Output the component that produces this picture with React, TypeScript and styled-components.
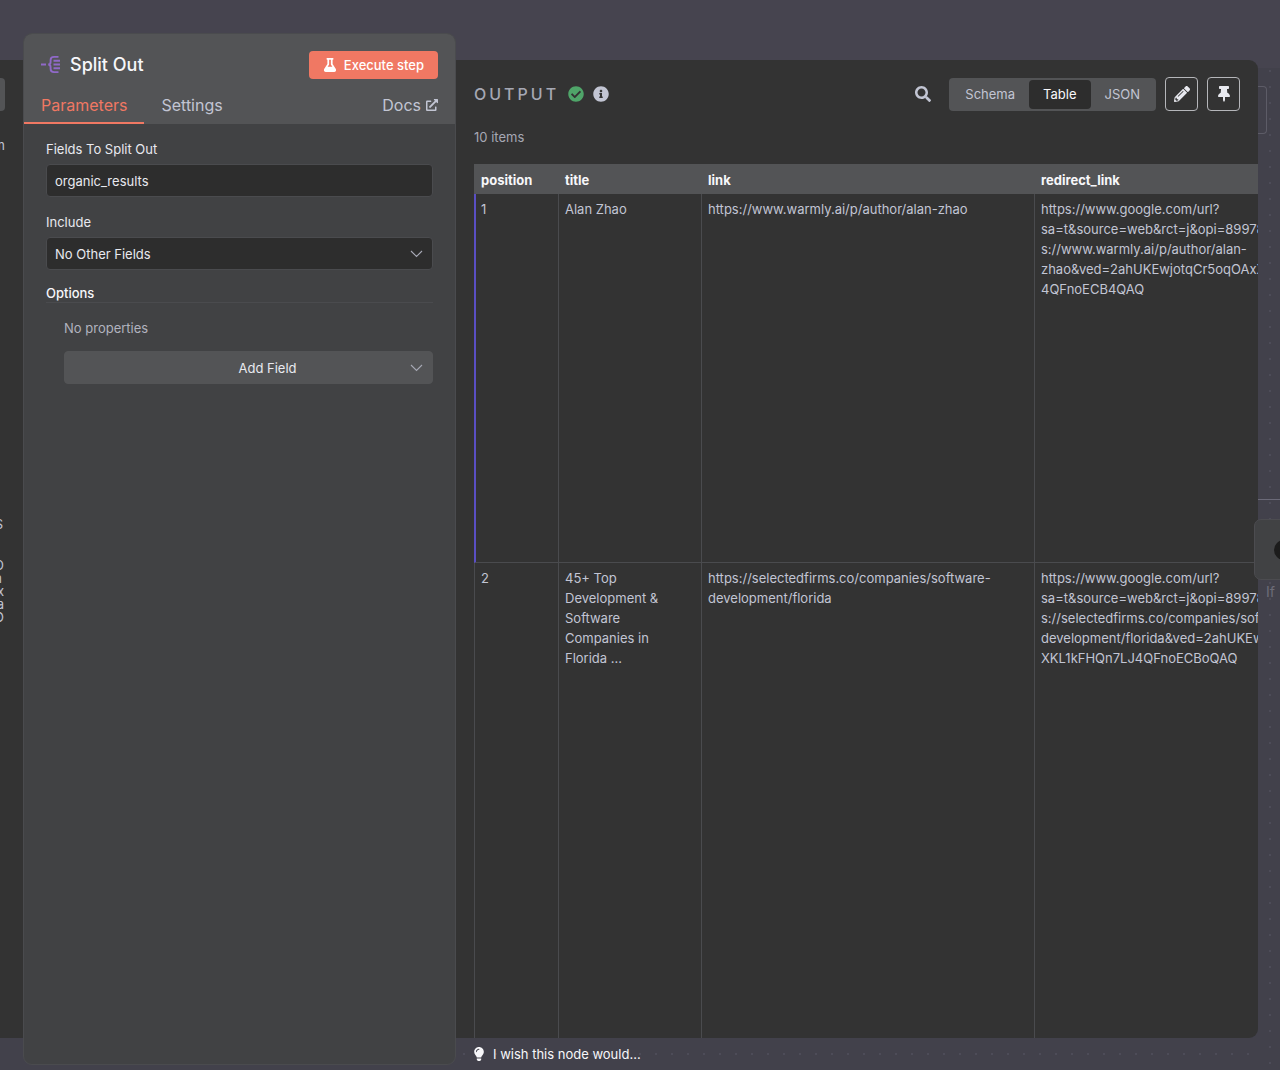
import React, { useState } from 'react';
import styled, { createGlobalStyle, css } from 'styled-components';
import {
  FaCheckCircle,
  FaExternalLinkAlt,
  FaFlask,
  FaInfoCircle,
  FaLightbulb,
  FaPencilAlt,
  FaSearch,
  FaThumbtack,
} from 'react-icons/fa';

const color = {
  canvas: '#42414b',
  canvasTop: '#46444f',
  dot: '#4d4c58',
  panel: '#333333',
  params: '#414244',
  raised: '#535456',
  line: '#4a4b4e',
  field: '#2d2d2d',
  text: '#e8e9ef',
  bright: '#f7f7fa',
  muted: '#c2c5d3',
  dim: '#a6a8b4',
  accent: '#f07863',
  run: '#5a4fc4',
};

const GlobalStyle = createGlobalStyle`
  * { box-sizing: border-box; }
  body { margin: 0; background: ${color.canvas}; }
  body, button, input, select {
    font-family: Inter, "Liberation Sans", sans-serif;
    font-size: 13px;
    line-height: 20px;
  }
  button { cursor: pointer; }
`;

const Page = styled.div`
  display: grid;
  grid-template-columns: 23px 433px minmax(0, 1fr) 22px;
  height: 100vh;
  overflow: hidden;
  background: linear-gradient(${color.canvasTop} 68px, ${color.canvas} 68px);
`;

/* Input panel, mostly scrolled out on the left */
const InputPanel = styled.aside`
  margin: 60px 0 32px;
  background: ${color.panel};
  color: ${color.muted};
  overflow: hidden;
  display: flex;
  flex-direction: column;
  align-items: flex-start;
`;

const InputToggle = styled.span`
  width: 5px;
  height: 33px;
  margin-top: 18px;
  background: ${color.raised};
  border-radius: 0 4px 4px 0;
`;

const Sliver = styled.span<{ $width: number; $top: number }>`
  display: flex;
  justify-content: flex-end;
  width: ${(p) => p.$width}px;
  margin-top: ${(p) => p.$top}px;
  overflow: hidden;
`;

const SliverLines = styled.div`
  display: flex;
  flex-direction: column;
  margin-top: 25px;
  line-height: 13px;
`;

/* Parameters panel */
const Params = styled.section`
  display: flex;
  flex-direction: column;
  margin: 33px 0 5px;
  background: ${color.params};
  border: 1px solid ${color.line};
  border-radius: 9px;
  overflow: hidden;
`;

const ParamsHeader = styled.header`
  background: ${color.raised};
  padding-top: 17px;
`;

const TitleRow = styled.div`
  display: flex;
  align-items: center;
  gap: 9px;
  padding: 0 17px;
`;

const Title = styled.h1`
  flex: 1;
  margin: 0;
  color: ${color.bright};
  font-size: 18px;
  font-weight: 500;
  line-height: 28px;
`;

const ExecuteButton = styled.button`
  display: flex;
  align-items: center;
  gap: 7px;
  height: 28px;
  padding: 0 14px;
  border: 0;
  border-radius: 4px;
  background: ${color.accent};
  color: #fff;
  font-weight: 500;
`;

const Tabs = styled.nav`
  display: flex;
  align-items: flex-end;
  height: 45px;
`;

const tabStyle = css`
  display: flex;
  align-items: center;
  gap: 5px;
  height: 38px;
  padding: 0 17px;
  border: 0;
  background: none;
  color: ${color.muted};
  font-size: 16px;
  text-decoration: none;
`;

const Tab = styled.button<{ $active?: boolean }>`
  ${tabStyle}
  border-top: 2px solid transparent;
  border-bottom: 2px solid ${(p) => (p.$active ? color.accent : 'transparent')};
  color: ${(p) => (p.$active ? color.accent : color.muted)};
`;

const DocsLink = styled.a`
  ${tabStyle}
  margin-left: auto;
`;

const ParamsBody = styled.div`
  display: flex;
  flex-direction: column;
  padding: 15px 22px;
  color: ${color.text};
`;

const Field = styled.div`
  display: flex;
  flex-direction: column;
  gap: 5px;
  margin-bottom: 15px;
`;

const boxStyle = css`
  width: 100%;
  height: 33px;
  padding: 0 8px;
  border: 1px solid ${color.line};
  border-radius: 4px;
  background: ${color.field};
  color: ${color.text};
  appearance: none;
  outline: none;
`;

const TextInput = styled.input`
  ${boxStyle}
`;

const SelectWrap = styled.div`
  display: grid;
  align-items: center;
  > * { grid-area: 1 / 1; }
  > svg { justify-self: end; margin-right: 10px; pointer-events: none; }
`;

const Select = styled.select`
  ${boxStyle}
`;

const AddSelect = styled.select`
  ${boxStyle}
  padding-left: 46px;
  background: ${color.raised};
  border-color: ${color.raised};
  text-align-last: center;
`;

const SectionTitle = styled.h2`
  margin: 0;
  border-bottom: 1px solid ${color.line};
  color: ${color.bright};
  font-size: 13px;
  font-weight: 500;
  line-height: 17px;
`;

const Options = styled.div`
  display: flex;
  flex-direction: column;
  gap: 13px;
  padding: 15px 0 0 18px;
  color: #b1b3bf;
`;

/* Output panel */
const OutputColumn = styled.div`
  display: flex;
  flex-direction: column;
  min-width: 0;
  min-height: 0;
  padding-top: 60px;
`;

const Output = styled.main`
  flex: 1;
  min-height: 0;
  display: flex;
  flex-direction: column;
  padding: 17px 0 0 18px;
  background: ${color.panel};
  border-radius: 0 9px 9px 0;
  color: ${color.muted};
  overflow: hidden;
`;

const Toolbar = styled.div`
  display: flex;
  align-items: center;
  gap: 9px;
  height: 34px;
  padding-right: 18px;
`;

const OutputTitle = styled.h2`
  margin: 0;
  color: ${color.dim};
  font-size: 16px;
  font-weight: 500;
  letter-spacing: 3px;
`;

const Status = styled.span<{ $ok?: boolean }>`
  display: flex;
  color: ${(p) => (p.$ok ? '#4fa569' : color.muted)};
`;

const SearchButton = styled.button`
  display: flex;
  margin-left: auto;
  margin-right: 9px;
  padding: 0;
  border: 0;
  background: none;
  color: ${color.muted};
`;

const Segments = styled.div`
  display: flex;
  padding: 2px;
  border-radius: 4px;
  background: ${color.raised};
`;

const Segment = styled.button<{ $active: boolean }>`
  height: 29px;
  padding: 0 14px;
  border: 0;
  border-radius: 4px;
  background: ${(p) => (p.$active ? color.field : 'transparent')};
  color: ${(p) => (p.$active ? color.bright : color.muted)};
`;

const IconButton = styled.button`
  display: flex;
  align-items: center;
  justify-content: center;
  width: 33px;
  height: 34px;
  padding: 0;
  border: 1px solid #b5b6ba;
  border-radius: 4px;
  background: none;
  color: ${color.text};
`;

const Count = styled.p`
  margin: 16px 0 17px;
  color: ${color.dim};
`;

const TableArea = styled.div`
  flex: 1;
  min-height: 0;
  overflow: hidden;
`;

const DataTable = styled.table`
  width: 893px;
  table-layout: fixed;
  border-collapse: separate;
  border-spacing: 0;
  text-align: left;
`;

const HeadCell = styled.th`
  height: 30px;
  padding: 1px 7px 0;
  background: ${color.raised};
  color: ${color.bright};
  font-weight: 700;
`;

const Row = styled.tr<{ $height: number }>`
  height: ${(p) => p.$height}px;
`;

const Cell = styled.td<{ $active?: boolean }>`
  padding: 5px 6px;
  border-left: 1px solid ${color.line};
  border-bottom: 1px solid ${color.line};
  vertical-align: top;
  overflow-wrap: anywhere;
  &:first-child {
    border-left: ${(p) => (p.$active ? `2px solid ${color.run}` : `1px solid ${color.line}`)};
    padding-left: ${(p) => (p.$active ? 5 : 6)}px;
  }
`;

const TitleCell = styled(Cell)`
  padding-right: 20px;
`;

const Footer = styled.footer`
  display: flex;
  align-items: center;
  height: 32px;
  padding-left: 18px;
  background: radial-gradient(circle, ${color.dot} 1px, transparent 1px) 0 8px / 16px 16px repeat-x;
`;

const WishLink = styled.a`
  display: flex;
  align-items: center;
  gap: 9px;
  color: ${color.bright};
  text-decoration: none;
`;

const Bulb = styled(FaLightbulb)`
  width: 10px;
  height: 14px;
`;

/* Strip of the workflow canvas seen behind the panels */
const Canvas = styled.div`
  position: relative;
  margin-top: 68px;
  background: radial-gradient(circle at 12px 3px, ${color.dot} 1px, transparent 1px) 0 0 / 22px 16px;
`;

const Sticky = styled.div`
  position: absolute;
  top: 18px;
  left: 0;
  width: 9px;
  height: 48px;
  border: 1px solid #5d5c67;
  border-left: 0;
  border-radius: 0 4px 4px 0;
`;

const Wire = styled.div`
  position: absolute;
  top: 431px;
  left: 0;
  width: 100%;
  height: 1px;
  background: #6b6a78;
`;

const CanvasNode = styled.div`
  position: absolute;
  top: 451px;
  left: -4px;
  width: 60px;
  height: 61px;
  border: 1px solid #4c4c50;
  border-radius: 7px;
  background: #414244;
  display: flex;
  align-items: center;
  padding-left: 19px;
`;

const NodeDot = styled.span`
  width: 20px;
  height: 20px;
  border-radius: 50%;
  background: #1c1c1c;
`;

const NodeLabel = styled.span`
  position: absolute;
  top: 514px;
  left: 8px;
  color: #6d6c78;
  font-size: 14px;
`;

const SplitIcon = () => (
  <svg width="20" height="20" viewBox="0 0 20 20" fill="none" stroke="#9069c8" strokeWidth="1.9">
    <path d="M0 9.500h5" />
    <path d="M17.500 1.900h-4.500c-2.200 0-3.400.9-3.400 3v1.800c0 1.700-.8 2.800-2.400 2.800 1.600 0 2.400 1.100 2.400 2.800v1.800c0 2.100 1.200 3 3.400 3h4.500" />
    <path d="M12.500 5.700h6.500M12.500 9.500h6.500M12.500 13.300h6.500" />
  </svg>
);

const Chevron = () => (
  <svg width="13" height="8" viewBox="0 0 13 8" fill="none" stroke={color.dim} strokeWidth="1.100">
    <path d="M1 1l5.500 5.500L12 1" />
  </svg>
);

const rows = [
  {
    position: 1,
    title: 'Alan Zhao',
    link: 'https://www.warmly.ai/p/author/alan-zhao',
    redirect: [
      'https://www.google.com/url?',
      'sa=t&source=web&rct=j&opi=89978449&url=http',
      's://www.warmly.ai/p/author/alan-',
      'zhao&ved=2ahUKEwjotqCr5oqOAxXKL1kFHQn7LJ',
      '4QFnoECB4QAQ',
    ],
    height: 369,
  },
  {
    position: 2,
    title: '45+ Top Development & Software Companies in Florida ...',
    link: 'https://selectedfirms.co/companies/software-development/florida',
    redirect: [
      'https://www.google.com/url?',
      'sa=t&source=web&rct=j&opi=89978449&url=http',
      's://selectedfirms.co/companies/software-',
      'development/florida&ved=2ahUKEwjotqCr5oqOAx',
      'XKL1kFHQn7LJ4QFnoECBoQAQ',
    ],
    height: 600,
  },
];

const views = ['Schema', 'Table', 'JSON'];

export default function App() {
  const [view, setView] = useState('Table');
  const [fields, setFields] = useState('organic_results');

  return (
    <>
      <GlobalStyle />
      <Page>
        <InputPanel>
          <InputToggle />
          <Sliver $width={5} $top={24}>m</Sliver>
          <Sliver $width={3} $top={359}>S</Sliver>
          <SliverLines>
            <Sliver $width={4} $top={0}>D</Sliver>
            <Sliver $width={2} $top={0}>n</Sliver>
            <Sliver $width={4} $top={0}>x</Sliver>
            <Sliver $width={4} $top={0}>a</Sliver>
            <Sliver $width={4} $top={0}>O</Sliver>
          </SliverLines>
        </InputPanel>

        <Params>
          <ParamsHeader>
            <TitleRow>
              <SplitIcon />
              <Title>Split Out</Title>
              <ExecuteButton>
                <FaFlask size={14} />
                Execute step
              </ExecuteButton>
            </TitleRow>
            <Tabs>
              <Tab $active>Parameters</Tab>
              <Tab>Settings</Tab>
              <DocsLink href="#docs">
                Docs
                <FaExternalLinkAlt size={12} />
              </DocsLink>
            </Tabs>
          </ParamsHeader>
          <ParamsBody>
            <Field>
              <label htmlFor="fields">Fields To Split Out</label>
              <TextInput id="fields" value={fields} onChange={(e) => setFields(e.target.value)} />
            </Field>
            <Field>
              <label htmlFor="include">Include</label>
              <SelectWrap>
                <Select id="include">
                  <option>No Other Fields</option>
                </Select>
                <Chevron />
              </SelectWrap>
            </Field>
            <SectionTitle>Options</SectionTitle>
            <Options>
              <span>No properties</span>
              <SelectWrap>
                <AddSelect aria-label="Add Field">
                  <option>Add Field</option>
                </AddSelect>
                <Chevron />
              </SelectWrap>
            </Options>
          </ParamsBody>
        </Params>

        <OutputColumn>
          <Output>
            <Toolbar>
              <OutputTitle>OUTPUT</OutputTitle>
              <Status $ok>
                <FaCheckCircle size={16} />
              </Status>
              <Status>
                <FaInfoCircle size={16} />
              </Status>
              <SearchButton aria-label="Search">
                <FaSearch size={16} />
              </SearchButton>
              <Segments>
                {views.map((v) => (
                  <Segment key={v} $active={v === view} aria-pressed={v === view} onClick={() => setView(v)}>
                    {v}
                  </Segment>
                ))}
              </Segments>
              <IconButton aria-label="Edit output">
                <FaPencilAlt size={16} />
              </IconButton>
              <IconButton aria-label="Pin data">
                <FaThumbtack size={16} />
              </IconButton>
            </Toolbar>
            <Count>10 items</Count>
            <TableArea>
              <DataTable>
                <colgroup>
                  <col style={{ width: 84 }} />
                  <col style={{ width: 143 }} />
                  <col style={{ width: 333 }} />
                  <col />
                </colgroup>
                <thead>
                  <tr>
                    <HeadCell>position</HeadCell>
                    <HeadCell>title</HeadCell>
                    <HeadCell>link</HeadCell>
                    <HeadCell>redirect_link</HeadCell>
                  </tr>
                </thead>
                <tbody>
                  {rows.map((r, i) => (
                    <Row key={r.position} $height={r.height}>
                      <Cell $active={i === 0}>{r.position}</Cell>
                      <TitleCell>{r.title}</TitleCell>
                      <Cell>{r.link}</Cell>
                      <Cell>
                        {r.redirect.map((part) => (
                          <React.Fragment key={part}>
                            {part}
                            <br />
                          </React.Fragment>
                        ))}
                      </Cell>
                    </Row>
                  ))}
                </tbody>
              </DataTable>
            </TableArea>
          </Output>
          <Footer>
            <WishLink href="#feedback">
              <Bulb />
              I wish this node would...
            </WishLink>
          </Footer>
        </OutputColumn>

        <Canvas>
          <Sticky />
          <Wire />
          <CanvasNode>
            <NodeDot />
          </CanvasNode>
          <NodeLabel>If</NodeLabel>
        </Canvas>
      </Page>
    </>
  );
}
